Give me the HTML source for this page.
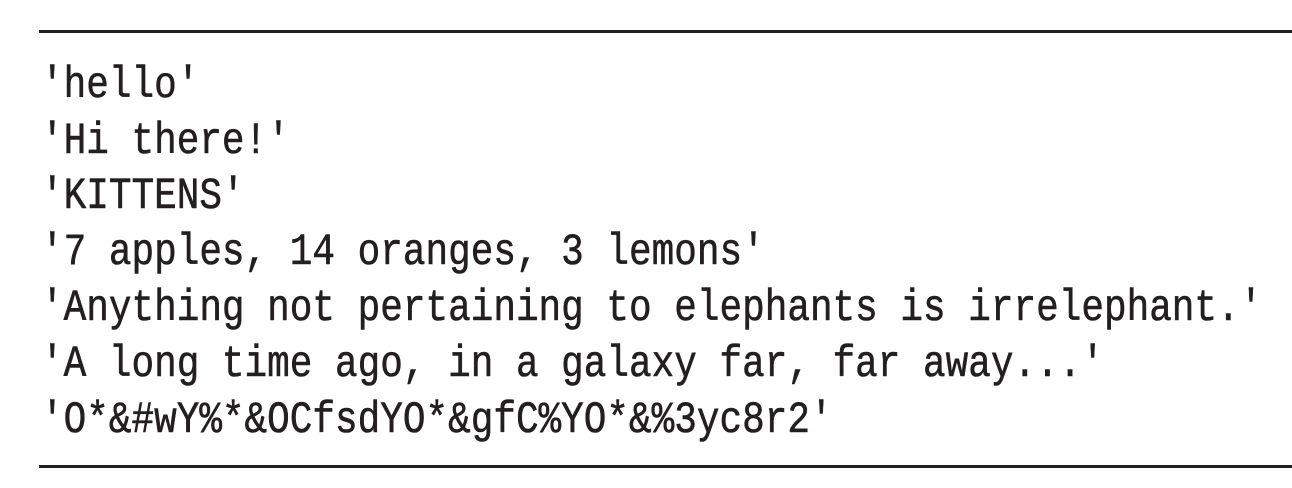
<!DOCTYPE html>
<html><head><meta charset="utf-8"><style>
html,body{margin:0;padding:0;background:#fff;}
body{width:1292px;height:488px;position:relative;overflow:hidden;}
.rule{position:absolute;left:39px;right:0;height:3px;background:#231f20;}
.l{position:absolute;left:41px;font-family:"Liberation Mono",monospace;font-size:37.7px;line-height:40px;color:#231f20;white-space:pre;transform:scaleY(1.18);transform-origin:0 30px;-webkit-text-stroke:0.5px #231f20;}
</style></head><body>
<div class="rule" style="top:30px"></div>
<div class="l" style="top:68px">'hello'</div>
<div class="l" style="top:124px">'Hi there!'</div>
<div class="l" style="top:179px">'KITTENS'</div>
<div class="l" style="top:235px">'7 apples, 14 oranges, 3 lemons'</div>
<div class="l" style="top:291px">'Anything not pertaining to elephants is irrelephant.'</div>
<div class="l" style="top:347px">'A long time ago, in a galaxy far, far away...'</div>
<div class="l" style="top:403px">'O*&amp;#wY%*&amp;OCfsdYO*&amp;gfC%YO*&amp;%3yc8r2'</div>
<div class="rule" style="top:465px"></div>
</body></html>
